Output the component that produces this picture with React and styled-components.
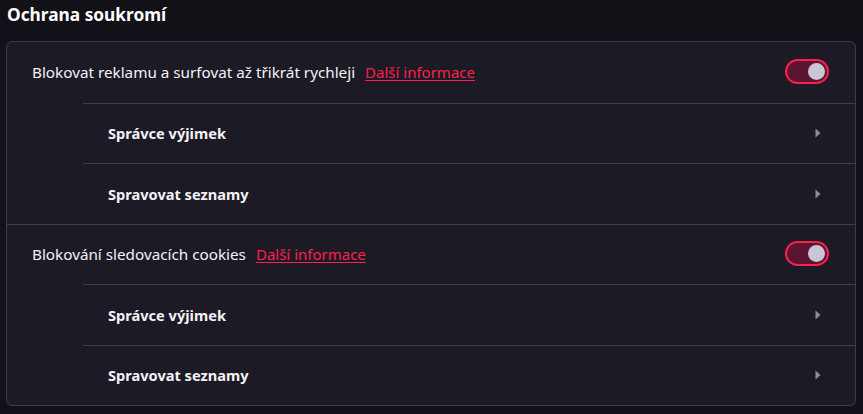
import React from "react";
import styled, { createGlobalStyle } from "styled-components";

const Global = createGlobalStyle`
  html, body { margin: 0; padding: 0; background: #131118; }
  body { font-family: "Noto Sans", "Open Sans", sans-serif; color: #f2f0f7; }
`;

const Page = styled.div`
  width: 863px;
  height: 414px;
  box-sizing: border-box;
  padding: 0 7px 0 6px;
  background: #131118;
`;

const Title = styled.h2`
  margin: 0;
  height: 41px;
  padding-left: 1px;
  font-size: 17.3px;
  font-weight: 700;
  line-height: 30px;
  color: #ffffff;
`;

const Card = styled.div`
  background: #1c1a24;
  border: 1px solid #3f3b4d;
  border-radius: 6px;
  overflow: hidden;
`;

const Row = styled.div`
  display: flex;
  align-items: center;
  height: 60.5px;
  box-sizing: border-box;
  padding: 0 27px 0 25px;
  margin-left: ${(p) => (p.$sub ? 76 : 0)}px;
  border-top: ${(p) => (p.$first ? "none" : "1px solid #3f3b4d")};
`;

const Label = styled.span`
  font-size: ${(p) => (p.$bold ? 14.6 : 15.25)}px;
  font-weight: ${(p) => (p.$bold ? 700 : 400)};
  color: #f4f2f8;
`;

const Link = styled.a`
  margin-left: 10px;
  font-size: 15px;
  color: #ff1f4f;
  text-decoration: underline;
  text-underline-offset: 2px;
  cursor: pointer;
`;

const Spacer = styled.div`
  flex: 1;
`;

const Toggle = styled.div`
  width: 44px;
  height: 25px;
  box-sizing: border-box;
  border: 2px solid #ff1f4f;
  border-radius: 13px;
  background: #5b1530;
  display: flex;
  align-items: center;
  justify-content: flex-end;
  padding-right: 2px;
  margin-right: -1px;
  margin-top: -1px;
`;

const Knob = styled.div`
  width: 17px;
  height: 17px;
  border-radius: 50%;
  background: #c9c5d6;
`;

const ChevronIcon = styled.svg`
  margin-right: 7px;
  display: block;
`;

const Chevron = () => (
  <ChevronIcon width="6" height="10" viewBox="0 0 6 10">
    <path d="M0.5 0.5 L5.5 5 L0.5 9.5 Z" fill="#8f8d9c" />
  </ChevronIcon>
);

const Section = ({ title, first }) => (
  <>
    <Row $first={first}>
      <Label>{title}</Label>
      <Link>Další informace</Link>
      <Spacer />
      <Toggle>
        <Knob />
      </Toggle>
    </Row>
    <Row $sub>
      <Label $bold>Správce výjimek</Label>
      <Spacer />
      <Chevron />
    </Row>
    <Row $sub>
      <Label $bold>Spravovat seznamy</Label>
      <Spacer />
      <Chevron />
    </Row>
  </>
);

export default function App() {
  return (
    <Page>
      <Global />
      <Title>Ochrana soukromí</Title>
      <Card>
        <Section first title="Blokovat reklamu a surfovat až třikrát rychleji" />
        <Section title="Blokování sledovacích cookies" />
      </Card>
    </Page>
  );
}
